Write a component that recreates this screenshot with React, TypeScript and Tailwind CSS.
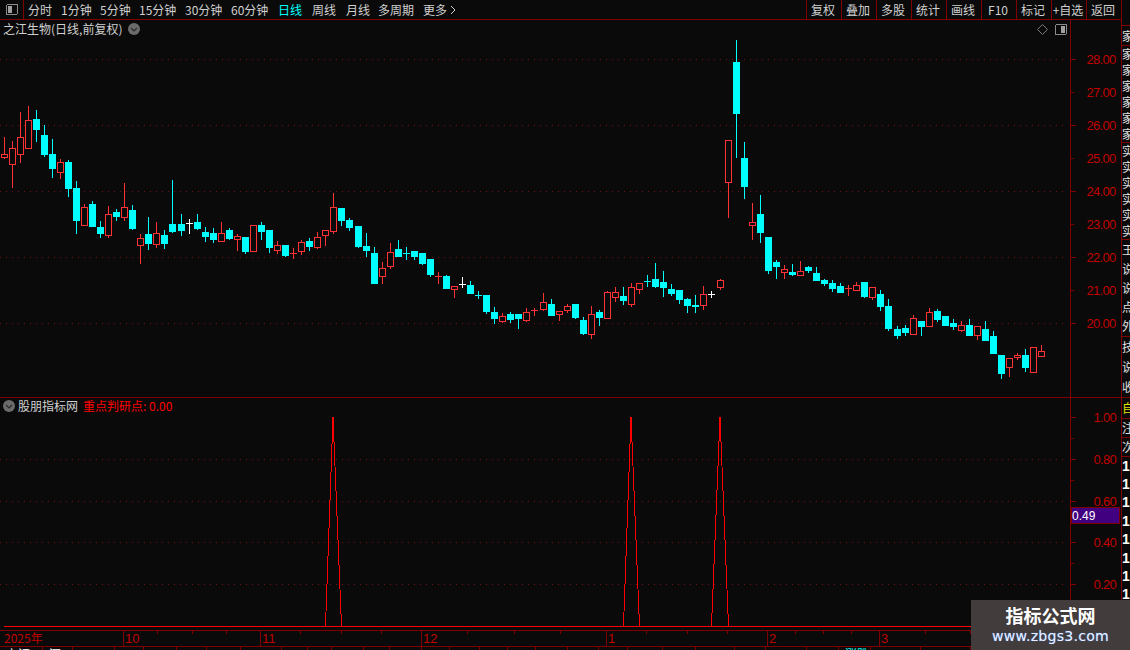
import React from 'react';

type Candle = [number, 'r' | 'c' | 'w', number, number, number, number];

// x, colour, high, body top, body bottom, low (all in page pixels)
const candles: Candle[] = [
  [4, 'r', 137, 154, 157, 158], [12, 'r', 141, 148, 164, 187], [20, 'r', 112, 137, 154, 162], [28, 'r', 106, 120, 148, 148],
  [36, 'c', 110, 119, 129, 141], [44, 'c', 125, 135, 154, 156], [52, 'c', 139, 154, 168, 177], [60, 'r', 159, 162, 172, 178],
  [68, 'c', 160, 162, 188, 196], [76, 'c', 181, 188, 220, 233], [84, 'r', 204, 207, 225, 225], [92, 'c', 201, 204, 226, 226],
  [100, 'c', 221, 227, 233, 237], [108, 'r', 206, 214, 235, 237], [116, 'c', 209, 212, 216, 220], [124, 'r', 183, 207, 217, 220],
  [132, 'c', 205, 210, 228, 229], [140, 'r', 234, 238, 245, 263], [148, 'c', 217, 234, 243, 249], [156, 'r', 222, 233, 244, 247],
  [164, 'c', 230, 235, 243, 248], [172, 'c', 180, 224, 231, 232], [181, 'c', 214, 224, 230, 235], [189, 'w', 219, 223, 223, 233],
  [197, 'c', 214, 222, 228, 229], [205, 'c', 227, 232, 236, 241], [213, 'c', 228, 233, 239, 242], [221, 'r', 222, 233, 241, 241],
  [229, 'c', 228, 230, 238, 239], [237, 'r', 234, 236, 239, 250], [245, 'c', 237, 237, 251, 253], [253, 'r', 225, 225, 251, 251],
  [261, 'c', 222, 225, 231, 239], [269, 'c', 230, 230, 247, 252], [277, 'r', 241, 245, 250, 253], [285, 'c', 245, 245, 255, 256],
  [293, 'r', 248, 253, 253, 258], [301, 'r', 240, 242, 251, 254], [309, 'c', 238, 241, 246, 250], [317, 'r', 232, 237, 247, 248],
  [325, 'r', 230, 230, 235, 245], [333, 'r', 193, 207, 231, 233], [341, 'c', 208, 208, 220, 225], [349, 'c', 218, 220, 227, 230],
  [358, 'c', 226, 226, 246, 247], [366, 'c', 233, 246, 250, 256], [374, 'c', 247, 253, 283, 283], [382, 'r', 262, 268, 276, 283],
  [390, 'r', 243, 252, 266, 268], [398, 'c', 240, 249, 256, 256], [406, 'c', 247, 253, 253, 259], [414, 'c', 251, 251, 256, 259],
  [422, 'c', 253, 253, 263, 264], [430, 'c', 259, 259, 274, 276], [438, 'r', 272, 276, 276, 283], [446, 'c', 275, 276, 288, 288],
  [454, 'r', 286, 286, 289, 297], [462, 'w', 277, 284, 284, 287], [470, 'c', 281, 285, 293, 293], [478, 'c', 291, 295, 295, 298],
  [486, 'c', 295, 295, 311, 313], [494, 'c', 307, 312, 318, 323], [502, 'r', 313, 316, 321, 322], [510, 'c', 312, 314, 319, 322],
  [518, 'c', 314, 314, 318, 328], [526, 'r', 308, 312, 320, 321], [534, 'r', 308, 310, 310, 315], [543, 'r', 293, 302, 309, 310],
  [551, 'c', 299, 304, 315, 315], [559, 'r', 311, 311, 314, 320], [567, 'r', 304, 306, 310, 312], [575, 'c', 304, 304, 317, 318],
  [583, 'c', 317, 320, 333, 334], [591, 'r', 306, 314, 334, 338], [599, 'c', 310, 312, 317, 325], [607, 'r', 291, 292, 318, 318],
  [615, 'r', 287, 292, 297, 301], [623, 'c', 287, 296, 300, 304], [631, 'r', 283, 287, 304, 306], [639, 'r', 283, 283, 289, 293],
  [647, 'c', 275, 281, 281, 286], [655, 'c', 263, 279, 286, 287], [663, 'c', 271, 282, 287, 296], [671, 'c', 284, 289, 293, 295],
  [679, 'c', 290, 290, 299, 303], [687, 'c', 298, 299, 305, 312], [695, 'c', 295, 305, 306, 312], [703, 'r', 286, 294, 305, 309],
  [711, 'w', 291, 294, 294, 297], [720, 'r', 279, 280, 287, 289], [728, 'r', 140, 140, 182, 217], [736, 'c', 40, 62, 113, 157],
  [744, 'c', 142, 158, 186, 198], [752, 'r', 203, 222, 225, 239], [760, 'c', 195, 214, 232, 242], [768, 'c', 237, 237, 270, 273],
  [776, 'c', 260, 262, 266, 278], [784, 'r', 265, 269, 272, 278], [792, 'c', 264, 272, 274, 275], [800, 'r', 261, 271, 275, 275],
  [808, 'c', 266, 267, 270, 272], [816, 'c', 267, 273, 280, 280], [824, 'c', 279, 280, 283, 285], [832, 'c', 280, 283, 288, 291],
  [840, 'c', 283, 286, 292, 292], [848, 'r', 285, 288, 288, 295], [856, 'r', 282, 285, 290, 290], [864, 'c', 282, 282, 296, 297],
  [872, 'r', 287, 287, 297, 299], [880, 'c', 290, 294, 306, 310], [888, 'c', 299, 306, 328, 330], [897, 'c', 326, 329, 335, 338],
  [905, 'c', 325, 328, 332, 335], [913, 'r', 315, 318, 334, 334], [921, 'c', 321, 321, 326, 335], [929, 'r', 308, 312, 326, 326],
  [937, 'c', 309, 311, 319, 321], [945, 'c', 316, 316, 325, 325], [953, 'c', 319, 323, 326, 329], [961, 'r', 321, 325, 330, 331],
  [969, 'c', 319, 325, 335, 335], [977, 'r', 326, 326, 335, 339], [985, 'c', 321, 329, 340, 340], [993, 'c', 331, 336, 353, 353],
  [1001, 'c', 355, 355, 373, 378], [1009, 'r', 358, 358, 367, 376], [1017, 'r', 353, 355, 357, 359], [1025, 'c', 349, 355, 367, 371],
  [1033, 'r', 347, 347, 372, 372], [1041, 'r', 345, 351, 356, 356],
];

const colors = { r: '#ff3333', c: '#00ffff', w: '#ffffff' };
const bg = '#0a0a0a';
const axisRed = '#800000';

const periods = [
  { label: '1分钟', w: 'w-[39px]' },
  { label: '5分钟', w: 'w-[39px]' },
  { label: '15分钟', w: 'w-[46px]' },
  { label: '30分钟', w: 'w-[46px]' },
  { label: '60分钟', w: 'w-[47px]' },
];
const tools = ['复权', '叠加', '多股', '统计', '画线', 'F10', '标记', '+自选', '返回'];
const prices = [
  [28, 59], [27, 92], [26, 125], [25, 158], [24, 191], [23, 224], [22, 257], [21, 290], [20, 323],
];
const rates = [
  ['1.00', 417], ['0.80', 459], ['0.60', 501], ['0.40', 542], ['0.20', 584],
] as const;
const months = [
  { x: 123, t: '10' }, { x: 260, t: '11' }, { x: 421, t: '12' }, { x: 606, t: '1' }, { x: 767, t: '2' }, { x: 879, t: '3' },
];
const smallTicks = [157, 192, 226, 300, 341, 381, 467, 514, 560, 646, 687, 727, 795, 823, 851, 925, 970, 1020];
const statusCells = [43, 30, 42, 29, 33, 30, 34, 41, 26, 24, 32, 26, 32, 28, 30, 28, 28, 32, 31, 29, 35, 33, 39, 31, 41, 32, 32, 50, 50];
const sideRows = [
  { h: 'h-[97px]', items: ['家', '家', '家', '家', '家', '家'] },
  { h: 'h-[97px]', items: ['实', '实', '实', '实', '实', '实'] },
  { h: 'h-[97px]', items: ['王', '说', '说', '点', '外'] },
  { h: 'h-[61px]', items: ['技', '说', '收'] },
];

function Chevron() {
  return (
    <svg width="12" height="12" viewBox="0 0 12 12" className="shrink-0">
      <circle cx="6" cy="6" r="6" fill="#6b6b6b" />
      <path d="M3 5l3 3 3-3" fill="none" stroke="#2a2a2a" strokeWidth="1.2" />
    </svg>
  );
}

function PanelIcon({ side }: { side: 'left' | 'right' }) {
  return (
    <svg width="12" height="11" viewBox="0 0 12 11" className="shrink-0" shapeRendering="crispEdges">
      <rect x="0.5" y="0.5" width="11" height="10" rx="1.5" fill="none" stroke="#8a8a8a" />
      <rect x={side === 'left' ? 2 : 6} y="2" width="4" height="7" fill="#a0a0a0" />
    </svg>
  );
}

function CandleChart() {
  return (
    <svg width="1070" height="377" viewBox="0 20 1070 377" className="block" shapeRendering="crispEdges">
      {[59, 125, 191, 257, 323].map((y) => (
        <line key={y} x1="0" x2="1066" y1={y + 0.5} y2={y + 0.5} stroke="#701010" strokeDasharray="1 5" />
      ))}
      {candles.map(([x, c, hi, top, bot, lo]) => (
        <g key={x}>
          <rect x={x} y={hi} width="1" height={lo - hi + 1} fill={colors[c]} />
          <rect x={x - 3} y={top} width="7" height={bot - top + 1} fill={colors[c]} />
          {c === 'r' && bot - top > 1 && (
            <rect x={x - 2} y={top + 1} width="5" height={bot - top - 1} fill={bg} />
          )}
        </g>
      ))}
    </svg>
  );
}

function Spike({ a, p, b }: { a: number; p: number; b: number }) {
  return <polyline points={`${a},626 ${p},417 ${b},626`} fill="none" stroke="#ff0000" />;
}

function SpikeChart() {
  return (
    <svg width="1070" height="232" viewBox="0 398 1070 232" className="block" shapeRendering="crispEdges">
      {[459, 501, 542, 584].map((y) => (
        <line key={y} x1="0" x2="1066" y1={y + 0.5} y2={y + 0.5} stroke="#701010" strokeDasharray="1 5" />
      ))}
      <line x1="4" x2="1070" y1="626.5" y2="626.5" stroke="#ff0000" />
      <Spike a={325.5} p={333} b={341.5} />
      <Spike a={623.5} p={631} b={639.5} />
      <Spike a={711.5} p={720} b={728.5} />
    </svg>
  );
}

export default function App() {
  return (
    <div className="relative flex h-[650px] w-[1130px] overflow-hidden bg-[#0a0a0a] font-['Noto_Sans_CJK_SC',sans-serif] text-[12px] text-[#d0d0d0]">
      <div className="flex w-[1122px] shrink-0 flex-col border-r border-[#800000]">
        {/* toolbar */}
        <div className="flex h-5 shrink-0 items-center border-b border-[#800000]">
          <div className="flex h-full w-6 items-center justify-center border-r border-[#800000]">
            <PanelIcon side="left" />
          </div>
          <span className="ml-1 w-[33px]">分时</span>
          {periods.map((p) => (
            <span key={p.label} className={p.w}>{p.label}</span>
          ))}
          <span className="w-[34px] text-[#00ffff]">日线</span>
          <span className="w-[34px]">周线</span>
          <span className="w-[32px]">月线</span>
          <span className="w-[45px]">多周期</span>
          <span>更多</span>
          <svg width="7" height="10" viewBox="0 0 7 10" className="ml-[3px]">
            <path d="M1 1l4 4-4 4" fill="none" stroke="#d0d0d0" />
          </svg>
          <div className="ml-auto flex h-full">
            {tools.map((t) => (
              <div key={t} className="flex h-full w-[35px] items-center justify-center border-l border-[#800000] pr-[2px] whitespace-nowrap">
                {t}
              </div>
            ))}
          </div>
        </div>

        {/* candle pane */}
        <div className="relative flex h-[378px] shrink-0 border-b border-[#800000]">
          <CandleChart />
          <div className="absolute top-[1px] left-[3px] flex items-center gap-[6px] leading-[16px]">
            <span>之江生物(日线,前复权)</span>
            <Chevron />
          </div>
          <div className="absolute top-1 left-[1037px] flex items-center gap-[7px]">
            <svg width="11" height="11" viewBox="0 0 11 11">
              <path d="M5.5.5l5 5-5 5-5-5z" fill="none" stroke="#7a7a7a" />
            </svg>
            <PanelIcon side="right" />
          </div>
          <div className="w-[51px] border-l border-[#800000]">
            <svg width="50" height="377" viewBox="1071 20 50 377" className="block" shapeRendering="crispEdges">
              {prices.map(([p, y], i) => (
                <g key={p}>
                  <rect x="1071" y={y} width={i % 2 ? 3 : 5} height="1" fill={axisRed} />
                  <text x="1115.5" y={y + 5} textAnchor="end" fill="#c00000" className="font-['Liberation_Sans',sans-serif] text-[13px] tracking-[-0.7px]">
                    {p}.00
                  </text>
                </g>
              ))}
            </svg>
          </div>
        </div>

        {/* indicator pane */}
        <div className="relative flex h-[232px] shrink-0">
          <SpikeChart />
          <div className="absolute top-0 left-[3px] flex items-center leading-[16px]">
            <Chevron />
            <span className="ml-[3px]">股朋指标网</span>
            <span className="ml-[5px] text-[#ff0000]">重点判研点: 0.00</span>
          </div>
          <div className="relative w-[51px] border-l border-[#800000]">
            <svg width="50" height="232" viewBox="1071 398 50 232" className="block" shapeRendering="crispEdges">
              {rates.map(([t, y]) => (
                <g key={t}>
                  <rect x="1071" y={y} width="5" height="1" fill={axisRed} />
                  <rect x="1071" y={y + 21} width="3" height="1" fill={axisRed} />
                  <text x="1116" y={y + 5} textAnchor="end" fill="#c00000" className="font-['Liberation_Sans',sans-serif] text-[13px] tracking-[-0.7px]">
                    {t}
                  </text>
                </g>
              ))}
            </svg>
            <div className="absolute top-[109px] left-0 flex h-[17px] w-[49px] items-center border border-[#800000] bg-[#400080] font-['Liberation_Sans',sans-serif] text-[12px] text-white">
              0.49
            </div>
          </div>
        </div>

        {/* date axis */}
        <div className="h-[17px] shrink-0 border-y border-[#800000]">
          <svg width="1121" height="15" viewBox="0 631 1121 15" className="block" shapeRendering="crispEdges">
            <text x="4" y="643" fill="#c00000" className="text-[12px]">2025年</text>
            {months.map((m) => (
              <g key={m.x}>
                <rect x={m.x} y="631" width="1" height="15" fill={axisRed} />
                <text x={m.x + 2} y="643" fill="#c00000" className="font-['Liberation_Sans',sans-serif] text-[13px]">{m.t}</text>
              </g>
            ))}
            {smallTicks.map((x) => (
              <rect key={x} x={x} y="631" width="1" height="3" fill={axisRed} />
            ))}
          </svg>
        </div>

        {/* bottom tabs, cut off by the window */}
        <div className="flex h-[3px] shrink-0 overflow-hidden leading-[12px]">
          {statusCells.map((w, i) => (
            <div key={i} style={{ width: w }} className="relative shrink-0 border-r border-[#800000] pt-px pl-[6px] text-white">
              {i === 0 && <span>上证</span>}
              {i === 1 && <span>深</span>}
              {i === 26 && <span className="text-[#00ffff]">涨跌</span>}
            </div>
          ))}
        </div>
      </div>

      {/* side list, only its left edge is visible */}
      <div className="flex w-2 shrink-0 flex-col overflow-hidden pt-[25px] text-[#e0e0e0]">
        <div className="flex h-5 shrink-0 items-center border-t border-[#800000] whitespace-nowrap">家</div>
        {sideRows.map((s, i) => (
          <div key={i} className={`flex ${s.h} shrink-0 flex-col justify-around border-t border-[#800000] whitespace-nowrap`}>
            {s.items.map((c, j) => (
              <span key={j} className="leading-none">{c}</span>
            ))}
          </div>
        ))}
        <div className="flex h-[21px] shrink-0 items-center border-t border-[#800000] text-[#e0e000]">自</div>
        <div className="flex h-[19px] shrink-0 items-center border-t border-[#800000]">注</div>
        <div className="flex h-5 shrink-0 items-center border-y border-[#800000]">次</div>
        {Array.from({ length: 11 }).map((_, i) => (
          <div key={i} className="flex h-[18.4px] shrink-0 items-center font-['Liberation_Sans',sans-serif] text-[14px] font-bold text-white">1</div>
        ))}
      </div>

      {/* site watermark */}
      <div className="absolute top-[600px] left-[971px] flex h-[50px] w-[159px] flex-col items-center bg-[#423c3c]">
        <span className="mt-[3px] text-[18px] leading-[24px] font-bold text-white">指标公式网</span>
        <span className="font-['DejaVu_Sans',sans-serif] text-[14px] leading-[19px] tracking-[0.3px] text-[#e8f0ff] [text-shadow:0_0_1px_#4a90ff]">www.zbgs3.com</span>
      </div>
    </div>
  );
}
